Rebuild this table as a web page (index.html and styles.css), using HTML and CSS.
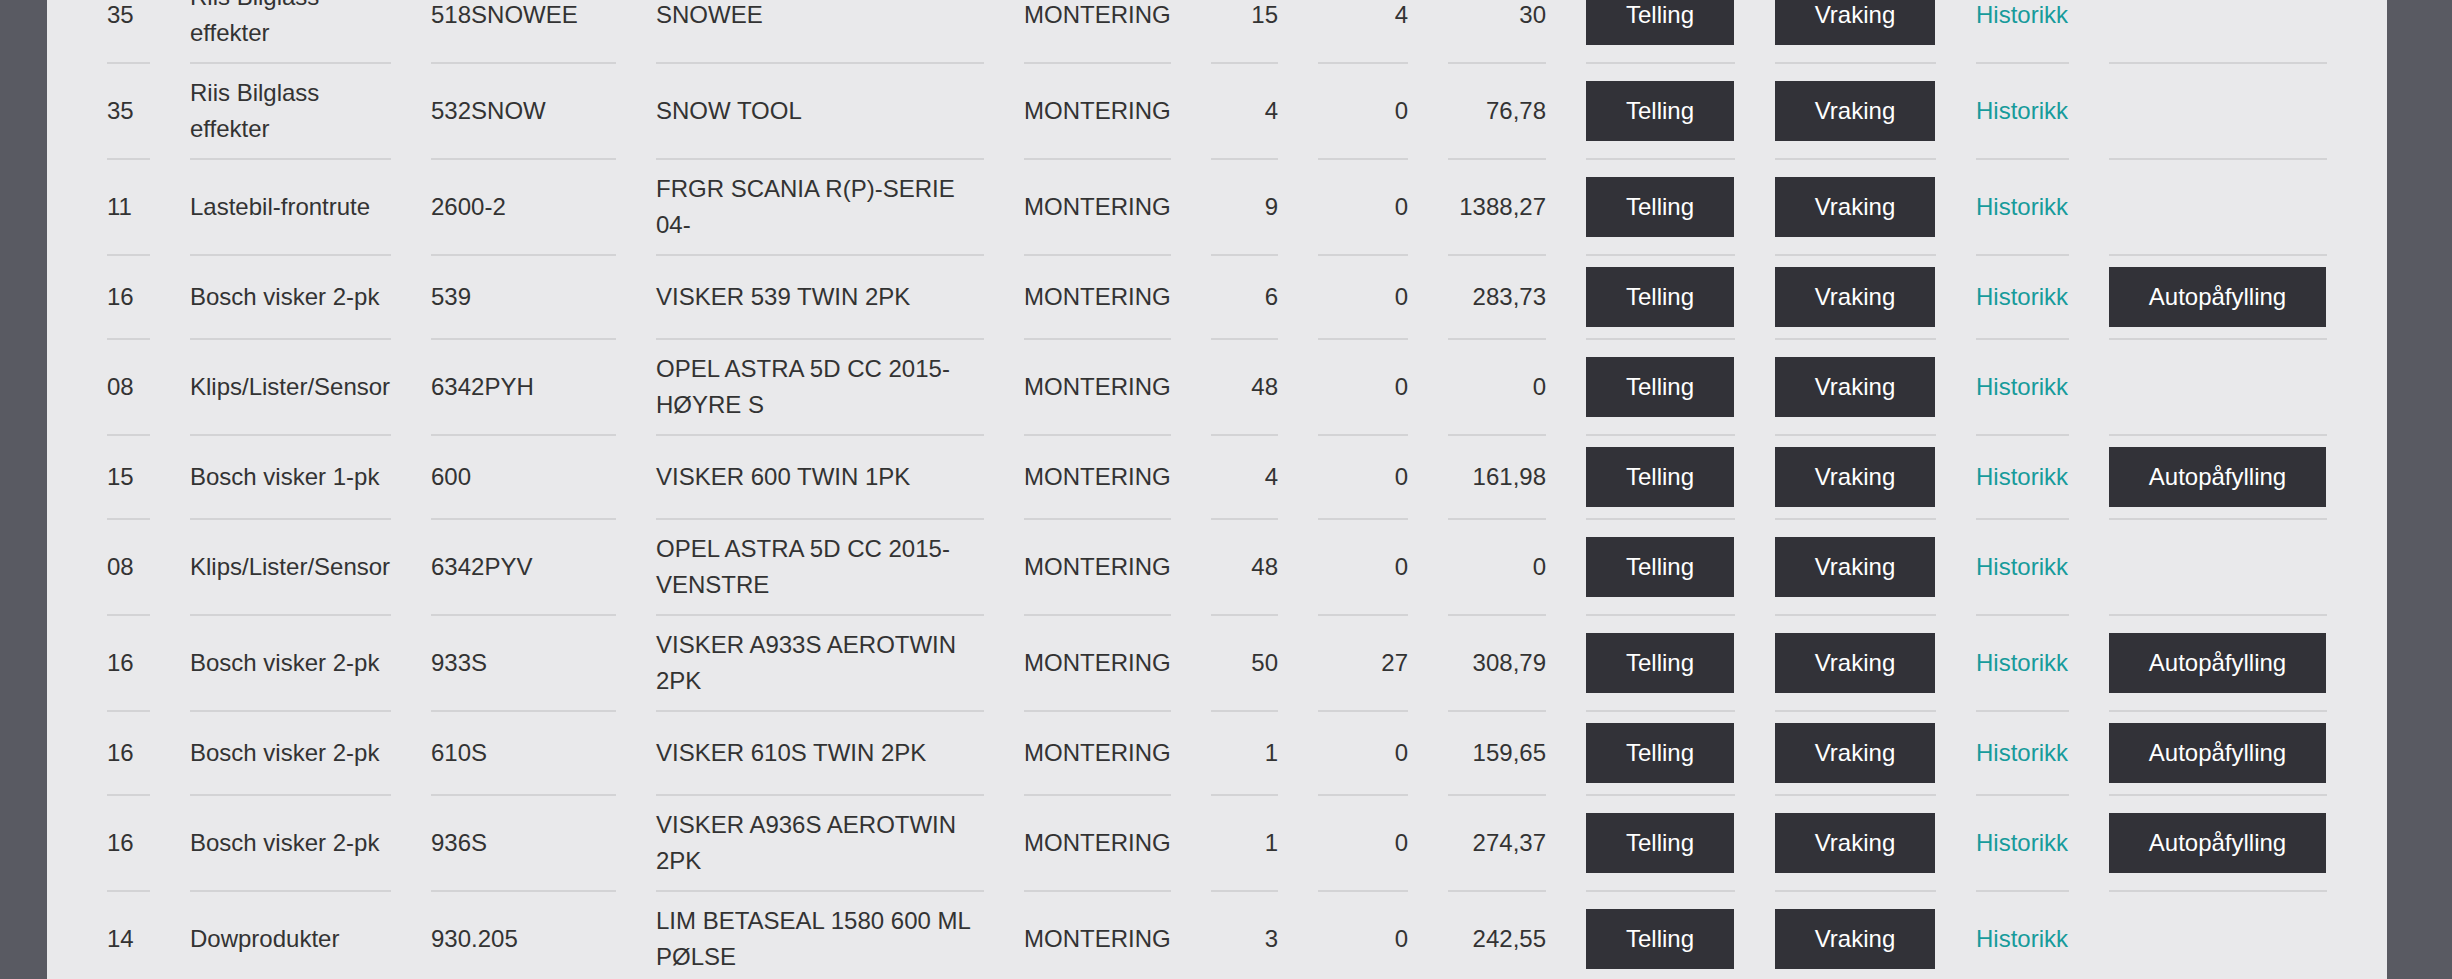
FILE: index.html
```html
<!DOCTYPE html>
<html lang="no">
<head>
<meta charset="utf-8">
<title>Lager</title>
<link rel="stylesheet" href="styles.css">
</head>
<body>
<div class="page">
  <div class="panel">
    <table class="stock">
      <colgroup>
        <col class="c-grp"><col class="c-cat"><col class="c-art"><col class="c-desc"><col class="c-type">
        <col class="c-qty"><col class="c-res"><col class="c-price"><col class="c-count"><col class="c-scrap">
        <col class="c-hist"><col class="c-auto">
      </colgroup>
      <tbody>
        <tr>
          <td>35</td><td>Riis Bilglass effekter</td><td>518SNOWEE</td><td>SNOWEE</td><td>MONTERING</td>
          <td class="num">15</td><td class="num">4</td><td class="num">30</td>
          <td><button class="btn">Telling</button></td><td><button class="btn">Vraking</button></td>
          <td><a class="link" href="#">Historikk</a></td><td></td>
        </tr>
        <tr>
          <td>35</td><td>Riis Bilglass effekter</td><td>532SNOW</td><td>SNOW TOOL</td><td>MONTERING</td>
          <td class="num">4</td><td class="num">0</td><td class="num">76,78</td>
          <td><button class="btn">Telling</button></td><td><button class="btn">Vraking</button></td>
          <td><a class="link" href="#">Historikk</a></td><td></td>
        </tr>
        <tr>
          <td>11</td><td>Lastebil-frontrute</td><td>2600-2</td><td>FRGR SCANIA R(P)-SERIE 04-</td><td>MONTERING</td>
          <td class="num">9</td><td class="num">0</td><td class="num">1388,27</td>
          <td><button class="btn">Telling</button></td><td><button class="btn">Vraking</button></td>
          <td><a class="link" href="#">Historikk</a></td><td></td>
        </tr>
        <tr>
          <td>16</td><td>Bosch visker 2-pk</td><td>539</td><td>VISKER 539 TWIN 2PK</td><td>MONTERING</td>
          <td class="num">6</td><td class="num">0</td><td class="num">283,73</td>
          <td><button class="btn">Telling</button></td><td><button class="btn">Vraking</button></td>
          <td><a class="link" href="#">Historikk</a></td><td><button class="btn">Autopåfylling</button></td>
        </tr>
        <tr>
          <td>08</td><td>Klips/Lister/Sensor</td><td>6342PYH</td><td>OPEL ASTRA 5D CC 2015-HØYRE S</td><td>MONTERING</td>
          <td class="num">48</td><td class="num">0</td><td class="num">0</td>
          <td><button class="btn">Telling</button></td><td><button class="btn">Vraking</button></td>
          <td><a class="link" href="#">Historikk</a></td><td></td>
        </tr>
        <tr>
          <td>15</td><td>Bosch visker 1-pk</td><td>600</td><td>VISKER 600 TWIN 1PK</td><td>MONTERING</td>
          <td class="num">4</td><td class="num">0</td><td class="num">161,98</td>
          <td><button class="btn">Telling</button></td><td><button class="btn">Vraking</button></td>
          <td><a class="link" href="#">Historikk</a></td><td><button class="btn">Autopåfylling</button></td>
        </tr>
        <tr>
          <td>08</td><td>Klips/Lister/Sensor</td><td>6342PYV</td><td>OPEL ASTRA 5D CC 2015-VENSTRE</td><td>MONTERING</td>
          <td class="num">48</td><td class="num">0</td><td class="num">0</td>
          <td><button class="btn">Telling</button></td><td><button class="btn">Vraking</button></td>
          <td><a class="link" href="#">Historikk</a></td><td></td>
        </tr>
        <tr>
          <td>16</td><td>Bosch visker 2-pk</td><td>933S</td><td>VISKER A933S AEROTWIN 2PK</td><td>MONTERING</td>
          <td class="num">50</td><td class="num">27</td><td class="num">308,79</td>
          <td><button class="btn">Telling</button></td><td><button class="btn">Vraking</button></td>
          <td><a class="link" href="#">Historikk</a></td><td><button class="btn">Autopåfylling</button></td>
        </tr>
        <tr>
          <td>16</td><td>Bosch visker 2-pk</td><td>610S</td><td>VISKER 610S TWIN 2PK</td><td>MONTERING</td>
          <td class="num">1</td><td class="num">0</td><td class="num">159,65</td>
          <td><button class="btn">Telling</button></td><td><button class="btn">Vraking</button></td>
          <td><a class="link" href="#">Historikk</a></td><td><button class="btn">Autopåfylling</button></td>
        </tr>
        <tr>
          <td>16</td><td>Bosch visker 2-pk</td><td>936S</td><td>VISKER A936S AEROTWIN 2PK</td><td>MONTERING</td>
          <td class="num">1</td><td class="num">0</td><td class="num">274,37</td>
          <td><button class="btn">Telling</button></td><td><button class="btn">Vraking</button></td>
          <td><a class="link" href="#">Historikk</a></td><td><button class="btn">Autopåfylling</button></td>
        </tr>
        <tr>
          <td>14</td><td>Dowprodukter</td><td>930.205</td><td>LIM BETASEAL 1580 600 ML PØLSE</td><td>MONTERING</td>
          <td class="num">3</td><td class="num">0</td><td class="num">242,55</td>
          <td><button class="btn">Telling</button></td><td><button class="btn">Vraking</button></td>
          <td><a class="link" href="#">Historikk</a></td><td></td>
        </tr>
      </tbody>
    </table>
  </div>
</div>
</body>
</html>
```
FILE: styles.css
```css
html, body {
  margin: 0;
  padding: 0;
  background: #595a62;
  overflow: hidden;
}

body {
  font-family: "Liberation Sans", Arial, sans-serif;
  font-size: 24px;
  line-height: 36px;
  color: #333333;
}

.page {
  margin-top: -32px;
  padding-left: 47px;
}

.panel {
  width: 2300px;
  padding: 0 20px 40px;
  background: #e9e9eb;
}

.stock {
  width: 2300px;
  table-layout: fixed;
  border-collapse: separate;
  border-spacing: 40px 0;
}

.c-grp { width: 43px; }
.c-cat { width: 201px; }
.c-art { width: 185px; }
.c-desc { width: 328px; }
.c-type { width: 147px; }
.c-qty { width: 67px; }
.c-res { width: 90px; }
.c-price { width: 98px; }
.c-count { width: 149px; }
.c-scrap { width: 161px; }
.c-hist { width: 93px; }
.c-auto { width: 218px; }

.stock td {
  padding: 11px 0;
  border-bottom: 2px solid #d3d3d5;
  vertical-align: middle;
  text-align: left;
}

.stock td.num {
  text-align: right;
}

.btn {
  display: block;
  box-sizing: border-box;
  width: calc(100% - 1px);
  height: 60px;
  margin: 0;
  padding: 0;
  border: none;
  border-radius: 0;
  background: #323238;
  color: #ffffff;
  font-family: inherit;
  font-size: 24px;
  line-height: 60px;
  text-align: center;
  white-space: nowrap;
  cursor: pointer;
}

.link {
  color: #179b9b;
  text-decoration: none;
}
```
